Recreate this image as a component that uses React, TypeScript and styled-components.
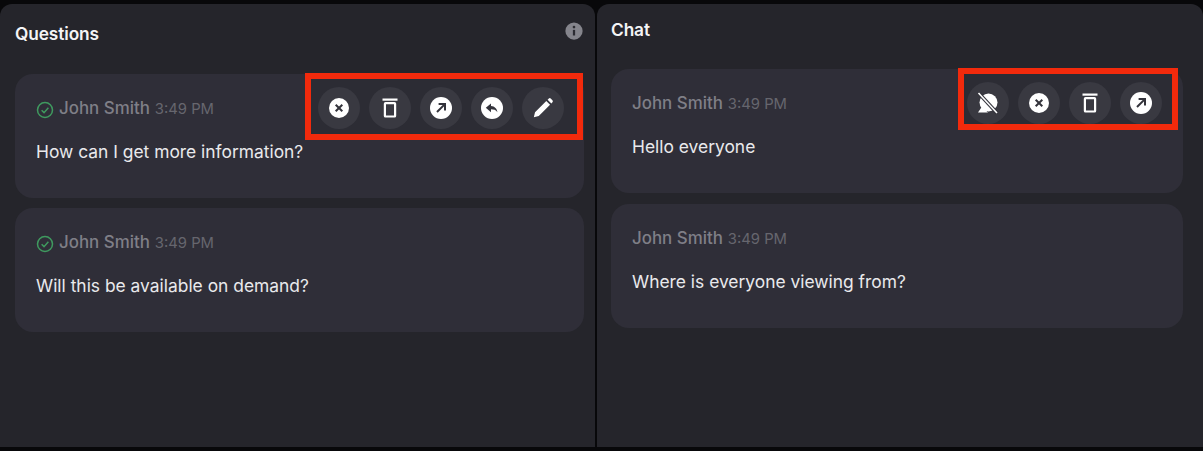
import React, {FunctionComponent} from "react";
import styled, {createGlobalStyle} from "styled-components";

const GlobalStyle = createGlobalStyle`
  html, body {
    margin: 0;
    padding: 0;
    background: #08080a;
  }

  body {
    font-family: Inter, "Liberation Sans", sans-serif;
  }
`

const Page = styled.div`
  width: 1203px;
  height: 451px;
  display: grid;
  grid-template-columns: 595px 606px;
  column-gap: 2px;
  padding: 4px 0;
  box-sizing: border-box;
  overflow: hidden;
`

const Panel = styled.section<{ $head: number, $left: number, $right: number }>`
  background: #25252b;
  border-radius: 12px 12px 0 0;
  height: 443px;
  padding: ${p => p.$head}px ${p => p.$right}px 0 ${p => p.$left}px;
  box-sizing: border-box;
  display: flex;
  flex-direction: column;
`

const PanelHead = styled.header<{ $below: number }>`
  display: flex;
  justify-content: space-between;
  align-items: center;
  height: 22px;
  margin-bottom: ${p => p.$below}px;
`

const Title = styled.h2`
  margin: 0;
  color: #f4f4f6;
  font-size: 17.3px;
  font-weight: 600;
  letter-spacing: -0.1px;
`

const CardList = styled.div<{ $gap: number }>`
  display: flex;
  flex-direction: column;
  gap: ${p => p.$gap}px;
`

const Card = styled.article`
  position: relative;
  height: 124px;
  background: #2f2e38;
  border-radius: 18px;
  padding: 24px 21px 0 21px;
  box-sizing: border-box;
`

const Meta = styled.div`
  display: flex;
  align-items: baseline;
  gap: 5px;
  height: 24px;
  margin-bottom: 18px;
`

const Author = styled.span`
  color: #7f7f87;
  font-size: 16.9px;
  font-weight: 500;
`

const Time = styled.span`
  color: #66666e;
  font-size: 14.8px;
`

const Message = styled.p`
  margin: 0;
  color: #e9e9ec;
  font-size: 17.4px;
  line-height: 24px;
`

const Toolbar = styled.div<{ $right: number, $height: number, $padLeft: number, $padRight: number }>`
  position: absolute;
  top: -1px;
  right: ${p => p.$right}px;
  display: flex;
  align-items: flex-start;
  gap: 9px;
  height: ${p => p.$height}px;
  padding: 8px ${p => p.$padRight}px 0 ${p => p.$padLeft}px;
  box-sizing: border-box;
  border: 6px solid #f22a0c;
  background: #2c2c34;
`

const RoundButton = styled.button`
  width: 42px;
  height: 42px;
  padding: 0;
  border: 0;
  border-radius: 50%;
  background: #393941;
  color: #ffffff;
  display: flex;
  align-items: center;
  justify-content: center;
`

const CheckWrap = styled.span`
  align-self: center;
  display: flex;
`

const InfoWrap = styled.span`
  display: flex;
  margin-right: 1px;
  margin-top: -4px;
`

const Svg: FunctionComponent<{ size?: number, children: React.ReactNode }> = ({size = 24, children}) => (
    <svg width={size} height={size} viewBox="0 0 24 24" fill="none">{children}</svg>
)

const DARK = "#33333b";

const CloseIcon = () => (
    <Svg>
        <circle cx="12" cy="12" r="10" fill="currentColor"/>
        <path d="M8.7 8.7l6.6 6.6M15.3 8.7l-6.6 6.6" stroke={DARK} strokeWidth="2"/>
    </Svg>
)

const TrashIcon = () => (
    <Svg>
        <path d="M4.500 3.600h15" stroke="currentColor" strokeWidth="2.200"/>
        <rect x="6.900" y="7.100" width="10.200" height="13.400" rx="0.600" stroke="currentColor" strokeWidth="2.200"/>
    </Svg>
)

const ArrowIcon = () => (
    <Svg>
        <circle cx="12" cy="12" r="11" fill="currentColor"/>
        <path d="M8 16l7.400-7.400M9.600 8h6.400v6.400" stroke={DARK} strokeWidth="2"/>
    </Svg>
)

const ReplyIcon = () => (
    <Svg>
        <circle cx="12" cy="12" r="11" fill="currentColor"/>
        <path d="M11 7.400L5.800 11.800 11 16.200v-2.900c2.800 0 4.800.6 6.400 2.900-.4-3.600-2.600-6-6.400-6.300z" fill={DARK}/>
    </Svg>
)

const PencilIcon = () => (
    <Svg size={22}>
        <path d="M2 22l1.300-5.400L15.600 4.300l4.100 4.100L7.400 20.700zM17 2.900l1.400-1.200a1.400 1.400 0 0 1 2 0l1.900 1.900a1.400 1.400 0 0 1 0 2L21.100 7z"
              fill="currentColor"/>
    </Svg>
)

const MuteChatIcon = () => (
    <Svg>
        <circle cx="12.500" cy="11.500" r="9" fill="currentColor"/>
        <path d="M2 21.500l4-6 6 6z" fill="currentColor"/>
        <path d="M3 2.500l18 19.500" stroke={DARK} strokeWidth="3.600"/>
        <path d="M2.500 2l18.500 20" stroke="currentColor" strokeWidth="1.600"/>
    </Svg>
)

const CheckIcon = () => (
    <Svg size={18}>
        <circle cx="12" cy="12" r="10" stroke="#3f9a5f" strokeWidth="2"/>
        <path d="M7.500 12.300l3.200 3.200 5.800-6.500" stroke="#3f9a5f" strokeWidth="2"/>
    </Svg>
)

const InfoIcon = () => (
    <Svg size={18}>
        <circle cx="12" cy="12" r="11.500" fill="#85858c"/>
        <path d="M12 10.500v7.500" stroke="#2c2c32" strokeWidth="3"/>
        <circle cx="12" cy="6.800" r="1.800" fill="#2c2c32"/>
    </Svg>
)

const MessageCard: FunctionComponent<{
    text: string,
    answered?: boolean,
    children?: React.ReactNode
}> = ({text, answered, children}) => (
    <Card>
        <Meta>
            {answered && <CheckWrap><CheckIcon/></CheckWrap>}
            <Author>John Smith</Author>
            <Time>3:49 PM</Time>
        </Meta>
        <Message>{text}</Message>
        {children}
    </Card>
)

const App: FunctionComponent<{}> = () => {
    return (
        <>
            <GlobalStyle/>
            <Page>
                <Panel $head={18} $left={15} $right={11}>
                    <PanelHead $below={30}>
                        <Title>Questions</Title>
                        <InfoWrap><InfoIcon/></InfoWrap>
                    </PanelHead>
                    <CardList $gap={10}>
                        <MessageCard text="How can I get more information?" answered>
                            <Toolbar $right={1} $height={67} $padLeft={7} $padRight={13}>
                                <RoundButton><CloseIcon/></RoundButton>
                                <RoundButton><TrashIcon/></RoundButton>
                                <RoundButton><ArrowIcon/></RoundButton>
                                <RoundButton><ReplyIcon/></RoundButton>
                                <RoundButton><PencilIcon/></RoundButton>
                            </Toolbar>
                        </MessageCard>
                        <MessageCard text="Will this be available on demand?" answered/>
                    </CardList>
                </Panel>
                <Panel $head={14} $left={14} $right={20}>
                    <PanelHead $below={29}>
                        <Title>Chat</Title>
                    </PanelHead>
                    <CardList $gap={11}>
                        <MessageCard text="Hello everyone">
                            <Toolbar $right={5} $height={62} $padLeft={3} $padRight={10}>
                                <RoundButton><MuteChatIcon/></RoundButton>
                                <RoundButton><CloseIcon/></RoundButton>
                                <RoundButton><TrashIcon/></RoundButton>
                                <RoundButton><ArrowIcon/></RoundButton>
                            </Toolbar>
                        </MessageCard>
                        <MessageCard text="Where is everyone viewing from?"/>
                    </CardList>
                </Panel>
            </Page>
        </>
    )
}

export default App;
